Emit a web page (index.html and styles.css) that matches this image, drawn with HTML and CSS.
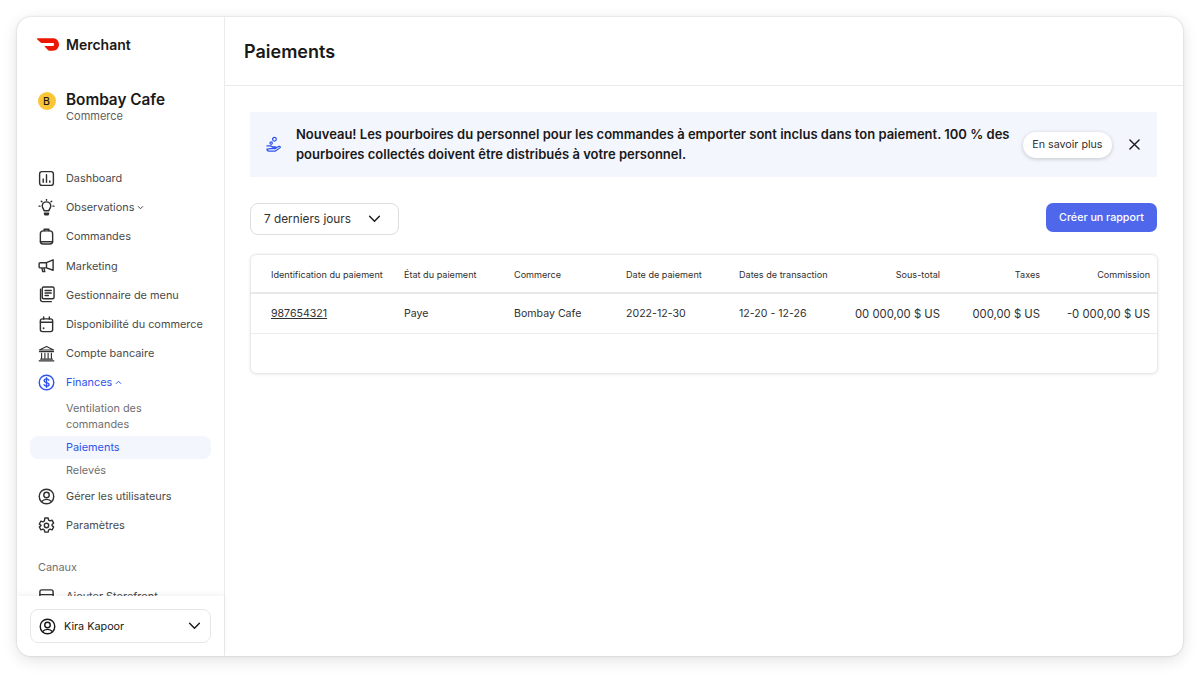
FILE: index.html
```html
<!DOCTYPE html>
<html lang="fr">
<head>
<meta charset="utf-8">
<title>Paiements</title>
<link rel="stylesheet" href="styles.css">
</head>
<body>
<div class="app">
  <aside class="sidebar">
    <div class="side-scroll">
      <div class="brand">
        <svg class="logo" viewBox="0 0 99.5 56.5"><path fill="#eb1700" d="M95.64 13.38A25.24 25.24 0 0 0 73.27 0H2.43A2.44 2.44 0 0 0 .72 4.16L16.15 19.68a7.26 7.26 0 0 0 5.15 2.14H71.24a6.44 6.44 0 1 1 .13 12.88H36.94a2.44 2.44 0 0 0-1.72 4.16L50.66 54.39a7.25 7.25 0 0 0 5.15 2.14H71.38c20.26 0 35.58-21.66 24.26-43.15"/></svg>
        <span class="brand-name">Merchant</span>
      </div>
      <div class="store">
        <span class="avatar">B</span>
        <div>
          <div class="store-name">Bombay Cafe</div>
          <div class="store-type">Commerce</div>
        </div>
      </div>
      <nav class="nav">
        <a class="nav-item"><svg class="icon" viewBox="0 0 18 18"><rect x="1.700" y="1.700" width="14.600" height="14.600" rx="2.500"/><path d="M5.500 9.500v3.500M9 5v8M12.500 11.500v1.500"/></svg>Dashboard</a>
        <a class="nav-item"><svg class="icon" viewBox="0 0 18 18"><path d="M6.400 12.500c0-1.800-1.900-2.700-1.900-5a4.500 4.500 0 0 1 9 0c0 2.300-1.900 3.200-1.900 5zM6.800 15h4.400l-.5 1.600H7.300zM9 .3v1M3.500 2.300l.7.7M14.500 2.300l-.7.7M1 7.500h1.200M15.800 7.500H17"/></svg>Observations <svg class="caret" viewBox="0 0 8 6"><path d="M1 1.500l3 3 3-3"/></svg></a>
        <a class="nav-item"><svg class="icon" viewBox="0 0 18 18"><rect x="2.500" y="3" width="13" height="14" rx="3"/><path d="M6.500 3V1.300h5V3M2.500 14.500h13"/></svg>Commandes</a>
        <a class="nav-item"><svg class="icon" viewBox="0 0 18 18"><path d="M16 3v11L9 11.500H2.200a1 1 0 0 1-1-1V7a1 1 0 0 1 1-1H9zM9 6v5.500M4 11.500l1 4h2.200l-1-4"/></svg>Marketing</a>
        <a class="nav-item"><svg class="icon" viewBox="0 0 18 18"><rect x="4.500" y="1" width="12.500" height="12.500" rx="1.600"/><path d="M7.500 4.800h6.500M7.500 7.400h6.500M7.500 10h3.500M2.700 3.500v11a2 2 0 0 0 2 2h9.500"/></svg>Gestionnaire de menu</a>
        <a class="nav-item"><svg class="icon" viewBox="0 0 18 18"><rect x="2.500" y="3" width="13" height="13.500" rx="2.200"/><path d="M2.500 6.700h13M6 1v2.500M12 1v2.500"/><circle class="dot" cx="5.900" cy="13" r="1"/></svg>Disponibilité du commerce</a>
        <a class="nav-item"><svg class="icon bank" viewBox="0 0 18 18"><path d="M1.500 5.300L9 1.500l7.500 3.800zM1.500 7h15M3.800 8.700v5M7.300 8.700v5M10.700 8.700v5M14.200 8.700v5M2.800 15h12.400M1.200 16.800h15.600"/></svg>Compte bancaire</a>
        <a class="nav-item active"><svg class="icon" viewBox="0 0 18 18"><circle cx="9" cy="9" r="7.700"/><path d="M11.500 6.600C11 5.600 10 5.200 9 5.200c-1.400 0-2.500.8-2.500 1.900 0 2.800 5.200 1.200 5.200 3.900 0 1.100-1.200 1.900-2.700 1.900-1.100 0-2.100-.5-2.600-1.500M9 3.900v10.200"/></svg>Finances <svg class="caret" viewBox="0 0 8 6"><path d="M1 4.500l3-3 3 3"/></svg></a>
        <div class="subnav">
          <a class="sub-item wrap">Ventilation des commandes</a>
          <a class="sub-item current">Paiements</a>
          <a class="sub-item last">Relevés</a>
        </div>
        <a class="nav-item"><svg class="icon" viewBox="0 0 18 18"><circle cx="9" cy="9" r="7.700"/><circle cx="9" cy="7.400" r="2.900"/><path d="M3.800 14.400C5 12.600 6.800 12 9 12s4 .6 5.200 2.400"/></svg>Gérer les utilisateurs</a>
        <a class="nav-item"><svg class="icon" viewBox="0 0 18 18"><path d="M7.300 1h3.400l.5 2.200 1.500.9 2.200-.7 1.700 3-1.700 1.500v1.200l1.700 1.500-1.700 3-2.200-.7-1.500.9-.5 2.200H7.300l-.5-2.200-1.500-.9-2.200.7-1.700-3 1.700-1.500V8.900L1.400 7.400l1.700-3 2.200.7 1.500-.9z"/><circle cx="9" cy="9" r="2.300"/></svg>Paramètres</a>
      </nav>
      <div class="section-label">Canaux</div>
      <a class="nav-item"><svg class="icon" viewBox="0 0 18 18"><rect x="2" y="2" width="14" height="14" rx="2"/><path d="M2 7h14"/></svg>Ajouter Storefront</a>
    </div>
    <div class="side-foot">
      <button class="user-select">
        <svg class="icon user-icon" viewBox="0 0 18 18"><circle cx="9" cy="9" r="7.700"/><circle cx="9" cy="7.400" r="2.900"/><path d="M3.800 14.400C5 12.600 6.800 12 9 12s4 .6 5.200 2.400"/></svg>
        <span class="user-name">Kira Kapoor</span>
        <svg class="chev" viewBox="0 0 14 9"><path d="M1.500 1.500L7 7l5.500-5.500"/></svg>
      </button>
    </div>
  </aside>
  <main class="main">
    <header class="header"><h1>Paiements</h1></header>
    <div class="content">
      <section class="banner">
        <svg class="banner-icon" viewBox="0 0 16 17"><circle cx="9" cy="3" r="2"/><circle cx="5.500" cy="7" r="1.300"/><path d="M1 10h4l2 1h3c1 0 1 2 0 2H7M10.500 12l3.500-1.500c1-.4 1.800.9.8 1.600L10 15.500H3c-1.300 0-2-.8-2-2z"/></svg>
        <p class="banner-text">Nouveau! Les pourboires du personnel pour les commandes à emporter sont inclus dans ton paiement. 100 % des pourboires collectés doivent être distribués à votre personnel.</p>
        <button class="pill">En savoir plus</button>
        <svg class="close" viewBox="0 0 12 12"><path d="M1 1l10 10M11 1L1 11"/></svg>
      </section>
      <div class="controls">
        <button class="range">7 derniers jours<svg class="chev" viewBox="0 0 14 9"><path d="M1.500 1.500L7 7l5.500-5.500"/></svg></button>
        <button class="primary">Créer un rapport</button>
      </div>
      <section class="table">
        <div class="row head">
          <span>Identification du paiement</span><span>État du paiement</span><span>Commerce</span><span>Date de paiement</span><span>Dates de transaction</span><span class="num">Sous-total</span><span class="num">Taxes</span><span class="num">Commission</span>
        </div>
        <div class="row body">
          <span><a class="link">987654321</a></span><span>Paye</span><span>Bombay Cafe</span><span>2022-12-30</span><span>12-20 - 12-26</span><span class="num">00 000,00 $ US</span><span class="num">000,00 $ US</span><span class="num">-0 000,00 $ US</span>
        </div>
        <div class="table-foot"></div>
      </section>
    </div>
  </main>
</div>
</body>
</html>
```
FILE: styles.css
```css
* { box-sizing: border-box; }
html, body { margin: 0; height: 100%; background: #fff; overflow: hidden; }
body { padding: 17px 17px 30px; font-family: "Inter", "Liberation Sans", sans-serif; color: #191919; }
button { font-family: inherit; cursor: pointer; }
svg { flex: none; }

.app {
  display: flex;
  height: 639px;
  background: #fff;
  border-radius: 14px;
  box-shadow: 0 0 2px rgba(0,0,0,.22), 0 4px 16px rgba(0,0,0,.12);
  overflow: hidden;
}

/* Sidebar */
.sidebar { width: 208px; flex: none; display: flex; flex-direction: column; border-right: 1px solid #ebebeb; }
.side-scroll { flex: 1; min-height: 0; overflow: hidden; padding: 21px 12px 0 20px; }
.brand { display: flex; align-items: center; gap: 7px; height: 13px; }
.logo { width: 22px; height: 13px; }
.brand-name { font-size: 14px; font-weight: 600; color: #191919; }
.store { display: flex; align-items: flex-start; gap: 10.500px; margin-top: 39px; }
.avatar { width: 18px; height: 18px; margin: 2px 0 0 .5px; border-radius: 50%; background: #fcc536; font-size: 10.500px; font-weight: 500; display: flex; align-items: center; justify-content: center; }
.store-name { font-size: 15.300px; font-weight: 600; line-height: 19px; }
.store-type { font-size: 11px; line-height: 14px; color: #5e5e5e; }
.nav { margin-top: 40.500px; margin-left: 1px; }
.nav-item { display: flex; align-items: center; height: 29.200px; font-size: 10.900px; color: #4a4a4a; gap: 11px; white-space: nowrap; }
.icon { width: 17px; height: 17px; fill: none; stroke: #303030; stroke-width: 1.500; stroke-linecap: round; stroke-linejoin: round; }
.icon.bank { stroke-width: 1.200; }
.icon .dot { fill: #303030; stroke: none; }
.caret { width: 7px; height: 5px; margin-left: -8px; fill: none; stroke: #4a4a4a; stroke-width: 1.200; }
.nav-item.active { color: #2f54eb; }
.active .icon { stroke: #2f54eb; }
.active .caret { stroke: #2f54eb; }
.subnav { margin-left: -8px; width: 181px; }
.sub-item { display: block; height: 22.500px; line-height: 22.500px; padding-left: 36px; font-size: 10.900px; color: #6f6f6f; border-radius: 8px; }
.sub-item.wrap { height: 38.500px; line-height: 16px; padding: 3px 40px 0 36px; }
.sub-item.current { height: 23px; line-height: 23px; background: #f4f6fe; color: #2f54eb; }
.sub-item.last { height: 23px; line-height: 23px; }
.section-label { margin-top: 13px; margin-left: 1px; height: 29px; line-height: 29px; font-size: 10.900px; color: #6f6f6f; }
.side-scroll > .nav-item { margin-left: 1px; }
.side-foot { flex: none; height: 60px; padding: 13px 13px 0 13px; background: #fff; box-shadow: 0 -2px 5px rgba(0,0,0,.05); position: relative; }
.user-select { display: flex; align-items: center; width: 100%; height: 34px; padding: 0 9px 0 8px; background: #fff; border: 1px solid #e7e7e7; border-radius: 8px; font-size: 10.800px; color: #191919; }
.user-icon { stroke: #191919; }
.user-name { flex: 1; text-align: left; margin-left: 8px; }
.chev { width: 13px; height: 8px; fill: none; stroke: #191919; stroke-width: 1.600; stroke-linecap: round; stroke-linejoin: round; }

/* Main */
.main { flex: 1; min-width: 0; display: flex; flex-direction: column; }
.header { height: 69px; display: flex; align-items: center; padding: 1px 0 0 19px; border-bottom: 1px solid #ebebeb; }
.header h1 { margin: 0; font-size: 18px; font-weight: 600; }
.content { padding: 26px 26px 0 25px; }
.banner { display: flex; align-items: center; height: 65px; padding: 0 17px 0 16px; background: #f4f6fe; }
.banner-icon { width: 15px; height: 17px; fill: none; stroke: #2f54eb; stroke-width: 1.300; stroke-linejoin: round; stroke-linecap: round; }
.banner-text { flex: 1; margin: 0 8px 0 15px; padding-bottom: 2px; font-size: 13px; font-weight: 600; line-height: 20px; }
.pill { height: 26px; padding: 0 9.500px; border: 0; border-radius: 13px; background: #fff; font-size: 10.700px; color: #303030; box-shadow: 0 1px 4px rgba(0,0,0,.2); white-space: nowrap; }
.close { width: 11px; height: 11px; margin-left: 17px; fill: none; stroke: #191919; stroke-width: 1.500; stroke-linecap: round; }
.controls { display: flex; justify-content: space-between; align-items: flex-start; margin-top: 26px; }
.range { display: flex; align-items: center; justify-content: space-between; width: 148.500px; height: 32px; padding: 0 16.500px 0 13px; background: #fff; border: 1px solid #ddd; border-radius: 8px; font-size: 11.800px; color: #303030; }
.primary { width: 111px; height: 29px; border: 0; border-radius: 7px; background: #4f67eb; color: #fff; font-size: 10.700px; font-weight: 500; }

/* Table */
.table { margin: 20px 0 0 1px; background: #fff; border-radius: 5px; box-shadow: 0 0 3px rgba(0,0,0,.18), 0 1px 5px rgba(0,0,0,.06); overflow: hidden; }
.row { display: grid; grid-template-columns: 133px 110px 112px 113px 100px 101px 100px 110px; align-items: center; padding: 0 7px 0 20px; white-space: nowrap; }
.head { height: 39px; padding-top: 1px; font-size: 9.100px; color: #303030; border-bottom: 2px solid #e8e8e8; }
.body { height: 40px; font-size: 10.600px; color: #303030; border-bottom: 1px solid #ededed; }
.body .num { font-size: 11.300px; }
.num { text-align: right; }
.link { text-decoration: underline; }
.table-foot { height: 39px; }
```
